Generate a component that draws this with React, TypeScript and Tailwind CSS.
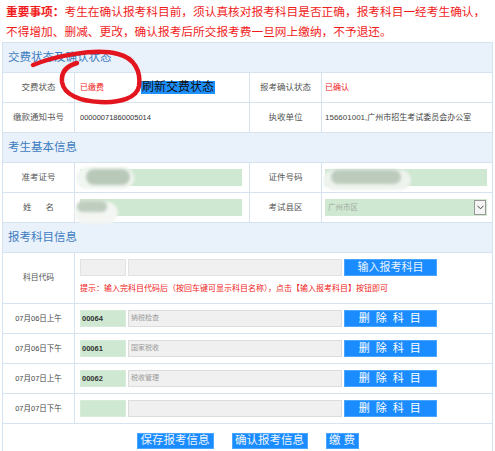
import React from 'react';

const font = "font-['Liberation_Sans','Noto_Sans_CJK_SC',sans-serif]";

function Header({ title }: { title: string }) {
  return (
    <div className="h-[30px] border-b border-[#d5e2f0] bg-[#e9f1fa] pl-[5px] flex items-center text-[11.5px] text-[#3d7cc0]">
      {title}
    </div>
  );
}

function Label({ children }: { children: React.ReactNode }) {
  return (
    <div className="flex items-center justify-center border-r border-[#d5e2f0] text-[8.5px] text-[#555]">
      {children}
    </div>
  );
}

function Blob({ className }: { className: string }) {
  return <div className={`absolute pointer-events-none rounded-full blur-[1.5px] ${className}`} />;
}

function SubjectRow({ date, code, name }: { date: string; code: string; name: string }) {
  return (
    <div className="grid grid-cols-[72px_1fr] h-[30px] border-b border-[#d5e2f0]">
      <div className="flex items-center justify-center border-r border-[#d5e2f0] text-[7.5px] text-[#444]">{date}</div>
      <div className="flex items-center pl-[5px] gap-[2px]">
        <div className="w-[46px] h-[17px] bg-[#cfe8d1] border border-[#d8ead9] flex items-center pl-[1px] text-[7.5px] font-bold text-[#333]">
          {code}
        </div>
        <div className="w-[214px] h-[17px] bg-[#f0f0f0] border border-[#dcdcdc] flex items-center pl-[2px] text-[7px] text-[#999]">
          {name}
        </div>
        <div className="w-[93px] h-[17px] bg-[#1a8cff] border border-[#4aa6ff] flex items-center justify-center text-[11px] text-white tracking-[1.5px] whitespace-nowrap">
          删 除 科 目
        </div>
      </div>
    </div>
  );
}

export default function App() {
  return (
    <div className={`relative w-[495px] h-[451px] overflow-hidden bg-white ${font}`}>
      {/* notice */}
      <div className="h-[42px] pl-[6px] pt-[2px] text-[11.7px] leading-[20px] text-[#f01c1c]">
        <div>
          <span className="font-bold">重要事项：</span>考生在确认报考科目前，须认真核对报考科目是否正确，报考科目一经考生确认，
        </div>
        <div>不得增加、删减、更改，确认报考后所交报考费一旦网上缴纳，不予退还。</div>
      </div>

      <div className="ml-[2px] w-[491px] border border-[#d5e2f0]">
        <Header title="交费状态及确认状态" />
        <div className="grid grid-cols-[72px_175px_72px_1fr] h-[30px] border-b border-[#d5e2f0]">
          <Label>交费状态</Label>
          <div className="flex items-center pl-[5px] border-r border-[#d5e2f0]">
            <span className="text-[8px] text-[#f02020]">已缴费</span>
            <span className="ml-[37px] h-[13px] leading-[13px] px-[1px] bg-[#1e90ff] text-[12px] text-[#111]">刷新交费状态</span>
          </div>
          <Label>报考确认状态</Label>
          <div className="flex items-center pl-[3px] text-[8px] text-[#f02020]">已确认</div>
        </div>
        <div className="grid grid-cols-[72px_175px_72px_1fr] h-[30px] border-b border-[#d5e2f0]">
          <Label>缴款通知书号</Label>
          <div className="flex items-center pl-[5px] border-r border-[#d5e2f0] text-[7.5px] text-[#333]">00000071860005014</div>
          <Label>执收单位</Label>
          <div className="flex items-center pl-[3px] text-[8px] text-[#444]">156601001,广州市招生考试委员会办公室</div>
        </div>

        <Header title="考生基本信息" />
        <div className="grid grid-cols-[72px_175px_72px_1fr] h-[30px] border-b border-[#d5e2f0]">
          <Label>准考证号</Label>
          <div className="flex items-center pl-[5px] border-r border-[#d5e2f0]">
            <div className="relative w-[162px] h-[17px] bg-[#cfe8d1]">
              <Blob className="left-[-4px] top-[-2px] w-[58px] h-[22px] bg-[#f2f6f2]" />
              <Blob className="left-[6px] top-[0px] w-[44px] h-[16px] bg-[#b9c9b9]" />
            </div>
          </div>
          <Label>证件号码</Label>
          <div className="flex items-center pl-[3px]">
            <div className="relative w-[162px] h-[17px] bg-[#cfe8d1]">
              <Blob className="left-[-2px] top-[1px] w-[88px] h-[20px] bg-[#eef3ee]" />
              <Blob className="left-[6px] top-[1px] w-[70px] h-[14px] bg-[#bccbbc]" />
            </div>
          </div>
        </div>
        <div className="grid grid-cols-[72px_175px_72px_1fr] h-[30px] border-b border-[#d5e2f0]">
          <Label>
            <span className="tracking-[14px]">姓</span>名
          </Label>
          <div className="flex items-center pl-[5px] border-r border-[#d5e2f0]">
            <div className="relative w-[162px] h-[17px] bg-[#cfe8d1]">
              <Blob className="left-[-6px] top-[3px] w-[44px] h-[22px] bg-[#f3f6f3]" />
              <Blob className="left-[-3px] top-[2px] w-[30px] h-[11px] bg-[#bfcdbf]" />
            </div>
          </div>
          <Label>考试县区</Label>
          <div className="flex items-center pl-[3px]">
            <div className="w-[162px] h-[17px] bg-[#cfe8d1] flex items-center justify-between pl-[3px] text-[7.5px] text-[#a0aaa0]">
              广州市区
              <div className="w-[12px] h-[15px] mr-[1px] bg-[#f4f4f4] border border-[#999] flex items-center justify-center">
                <svg width="7" height="5" viewBox="0 0 7 5">
                  <path d="M0.5 0.8 L3.5 3.8 L6.5 0.8" fill="none" stroke="#444" strokeWidth="1" />
                </svg>
              </div>
            </div>
          </div>
        </div>

        <Header title="报考科目信息" />
        <div className="grid grid-cols-[72px_1fr] h-[51px] border-b border-[#d5e2f0]">
          <Label>
            <span className="text-[7.8px]">科目代码</span>
          </Label>
          <div className="pl-[5px] pt-[6px]">
            <div className="flex gap-[2px]">
              <div className="w-[46px] h-[17px] bg-[#f0f0f0] border border-[#e2e2e2]" />
              <div className="w-[214px] h-[17px] bg-[#f0f0f0] border border-[#e2e2e2]" />
              <div className="w-[93px] h-[17px] bg-[#1a8cff] border border-[#4aa6ff] flex items-center justify-center text-[11px] text-[#e8f2ff]">
                输入报考科目
              </div>
            </div>
            <div className="mt-[7px] text-[8px] text-[#f02020] whitespace-nowrap">
              提示：输入完科目代码后（按回车键可显示科目名称），点击【输入报考科目】按钮即可
            </div>
          </div>
        </div>
        <SubjectRow date="07月06日上午" code="00064" name="纳税检查" />
        <SubjectRow date="07月06日下午" code="00061" name="国家税收" />
        <SubjectRow date="07月07日上午" code="00062" name="税收管理" />
        <SubjectRow date="07月07日下午" code="" name="" />

        <div className="h-[40px] pt-[9px] flex justify-center gap-[18px]">
          <div className="w-[77px] h-[16px] bg-[#1a8cff] border border-[#4aa6ff] flex items-center justify-center text-[11.5px] text-[#eef4fa] whitespace-nowrap">保存报考信息</div>
          <div className="w-[76px] h-[16px] bg-[#1a8cff] border border-[#4aa6ff] flex items-center justify-center text-[11.5px] text-[#eef4fa] whitespace-nowrap">确认报考信息</div>
          <div className="w-[33px] h-[16px] bg-[#1a8cff] border border-[#4aa6ff] flex items-center justify-center text-[11.5px] text-[#eef4fa] whitespace-nowrap">缴 费</div>
        </div>
      </div>

      {/* hand-drawn red mark */}
      <svg className="absolute left-0 top-0 pointer-events-none" width="495" height="451">
        <path
          d="M33 65 C 55 56, 95 48, 118 54 C 135 58, 141 72, 139 86 C 137 98, 120 103, 100 102 C 80 101, 64 95, 62 82 C 61 72, 66 66, 77 63"
          fill="none"
          stroke="#e3161f"
          strokeWidth="4.5"
          strokeLinecap="round"
        />
      </svg>
    </div>
  );
}
